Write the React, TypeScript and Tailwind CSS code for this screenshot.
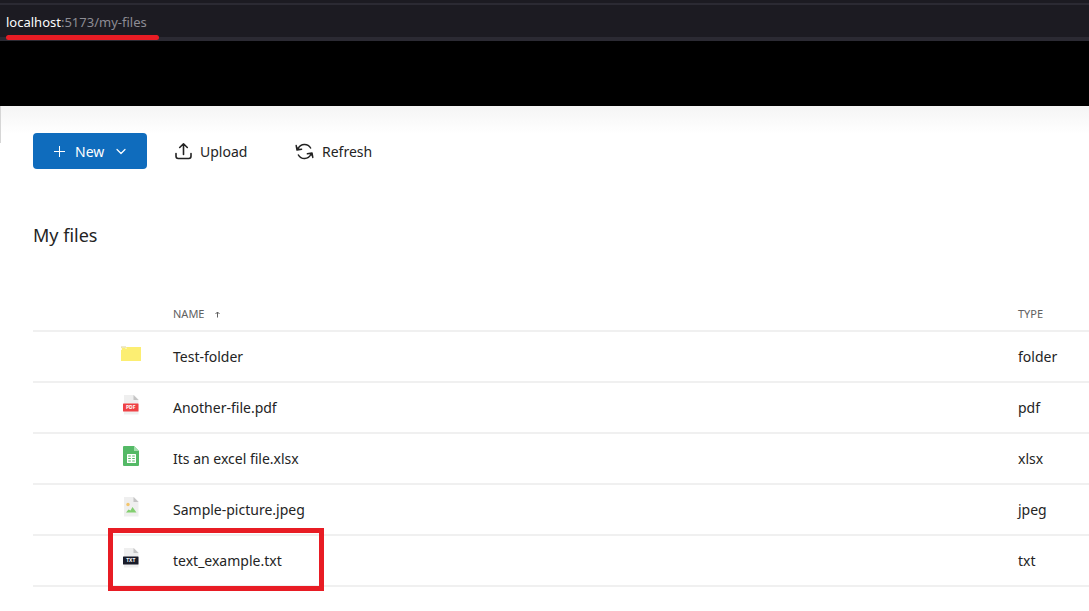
import React from "react";

type Kind = "folder" | "pdf" | "xlsx" | "jpeg" | "txt";

const files: { name: string; type: Kind; marked?: boolean }[] = [
  { name: "Test-folder", type: "folder" },
  { name: "Another-file.pdf", type: "pdf" },
  { name: "Its an excel file.xlsx", type: "xlsx" },
  { name: "Sample-picture.jpeg", type: "jpeg" },
  { name: "text_example.txt", type: "txt", marked: true },
];

function Sheet({ children }: { children?: React.ReactNode }) {
  return (
    <>
      <path d="M4 1h10l4.500 4.500V20.500H4z" fill="#efefef" />
      <path d="M13.500 1l5 5h-5z" fill="#c4c4c4" />
      {children}
    </>
  );
}

function Label({ fill, children }: { fill: string; children: React.ReactNode }) {
  return (
    <>
      <rect x="3" y="9.500" width="15.500" height="8" rx="0.500" fill={fill} />
      <text x="10.750" y="15.200" textAnchor="middle" fill="#fff" className="text-[5px] font-bold">
        {children}
      </text>
    </>
  );
}

function FileIcon({ kind }: { kind: Kind }) {
  return (
    <svg viewBox="0 0 22 22" className="block size-[22px]" aria-hidden="true">
      {kind === "folder" && (
        <>
          <path d="M1 4h20v14H1z" fill="#fcee72" />
          <path d="M1.500 7V4.500H6V6" fill="none" stroke="#fffbe0" />
          <path d="M1 4h5" stroke="#d3ca84" strokeWidth="0.800" />
        </>
      )}
      {kind === "pdf" && (
        <Sheet>
          <Label fill="#ef4145">PDF</Label>
        </Sheet>
      )}
      {kind === "xlsx" && (
        <>
          <path d="M3 2q0-1 1-1h10l5 5v14q0 1-1 1H4q-1 0-1-1z" fill="#54b966" />
          <path d="M14 1l5 5h-5z" fill="#a4deae" />
          <rect x="7" y="9" width="9" height="9" rx="0.500" fill="#fff" />
          <path d="M8.200 11h2.600M12.200 11h2.600M8.200 13.500h2.600M12.200 13.500h2.600M8.200 16h2.600M12.200 16h2.600" stroke="#54b966" strokeWidth="1.200" />
        </>
      )}
      {kind === "jpeg" && (
        <Sheet>
          <circle cx="8" cy="8.500" r="1.700" fill="#f3c56c" />
          <path d="M6 16.500l2.500-3 2 1 2-3.500 4 5.500z" fill="#83cf70" />
        </Sheet>
      )}
      {kind === "txt" && (
        <Sheet>
          <Label fill="#181b28">TXT</Label>
        </Sheet>
      )}
    </svg>
  );
}

function UploadIcon() {
  return (
    <svg viewBox="0 0 18 18" className="size-[18px]" fill="none" stroke="#222" strokeWidth="1.600" strokeLinecap="round" strokeLinejoin="round" aria-hidden="true">
      <path d="M8.500 12.500V2M4.700 5.500l3.800-3.700 3.800 3.700M1 11.500v2.800q0 2.200 2.200 2.200h10.600q2.200 0 2.200-2.200v-2.800" />
    </svg>
  );
}

function RefreshIcon() {
  return (
    <svg viewBox="0 0 20 18" className="h-[18px] w-5" fill="none" stroke="#222" strokeWidth="1.500" strokeLinecap="round" strokeLinejoin="round" aria-hidden="true">
      <path d="M3.200 6.500A7 7 0 0 1 15.600 6M15.800 12.500A7 7 0 0 1 3.400 13" />
      <path d="M1.200 3.600l.8 4.400 4.600-.8M17.800 15.400l-.8-4.400-4.600.8" />
      <path d="M1.200 3.600L2 8l4.600-.8-3.200-.8zM17.800 15.400L17 11l-4.600.8 3.200.8z" fill="#222" stroke="none" />
    </svg>
  );
}

export default function App() {
  return (
    <div className="min-h-screen overflow-x-hidden bg-white font-['Noto_Sans',sans-serif] text-[14px] text-[#242424]">
      <div className="flex h-[41px] items-center border-t-[3px] border-b-4 border-t-[#1c1b22] border-b-[#2b2a33] bg-[#1c1b22]">
        <div className="h-full w-full border-t-2 border-[#2b2a33] px-1.5 pt-[7px] text-[13px] leading-5 text-[#8d8c94]">
          <span className="relative inline-block">
            <span className="text-[#fbfbfe]">localhost</span>:5173/my-files
            <span className="absolute top-[23px] left-0 h-[5px] w-[153px] rounded-full bg-[#e81c24]" />
          </span>
        </div>
      </div>
      <header className="h-[65px] bg-black" />
      <main className="bg-linear-to-b from-[#f5f5f5] to-white to-[28px] pl-[33px]">
        <div className="relative flex items-center pt-[27px]">
          <span className="absolute top-0 -left-[33px] h-[37px] w-px bg-[#d6d6d6]" />
          <button className="flex h-9 w-[114px] items-center rounded-[4px] bg-[#0f6cbd] pl-5 text-white">
            <svg viewBox="0 0 12 12" className="size-3" fill="none" stroke="currentColor" aria-hidden="true">
              <path d="M6.500 1v11M1 6.500h11" />
            </svg>
            <span className="ml-2.5 w-8 text-left">New</span>
            <svg viewBox="0 0 12 12" className="ml-2 size-3" fill="none" stroke="currentColor" strokeWidth="1.200" strokeLinecap="round" strokeLinejoin="round" aria-hidden="true">
              <path d="M2 4.500l4 4 4-4" />
            </svg>
          </button>
          <button className="ml-7 flex w-[92px] items-center gap-[7px]">
            <UploadIcon />
            Upload
          </button>
          <button className="ml-7 flex items-center gap-[7px]">
            <RefreshIcon />
            Refresh
          </button>
        </div>
        <h1 className="mt-[52px] text-[18px] leading-7">My files</h1>
        <table className="mt-12 w-full table-fixed border-separate border-spacing-0 text-left">
          <colgroup>
            <col className="w-[140px]" />
            <col />
            <col className="w-[71px]" />
          </colgroup>
          <thead>
            <tr className="text-[11px] text-[#616161]">
              <th className="h-[35px] border-b-2 border-[#f0f0f0] p-0" aria-label="Icon" />
              <th className="border-b-2 border-[#f0f0f0] p-0 pt-0.5 font-normal">
                <button className="flex items-center gap-2.5">
                  NAME
                  <svg viewBox="0 0 8 8" className="size-2" fill="none" stroke="currentColor" aria-hidden="true">
                    <path d="M3.500 6.500V1M1.500 3l2-2 2 2" />
                  </svg>
                </button>
              </th>
              <th className="border-b-2 border-[#f0f0f0] p-0 pt-0.5 font-normal">TYPE</th>
            </tr>
          </thead>
          <tbody>
            {files.map((file) => (
              <tr key={file.name} className="relative">
                <td className="h-[51px] border-b-2 border-[#f0f0f0] p-0 pb-1.5 pl-[87px]">
                  <FileIcon kind={file.type} />
                  {file.marked && (
                    <span className="pointer-events-none absolute -top-2 left-[75px] h-[63px] w-[216px] border-[5px] border-[#e81c24]" />
                  )}
                </td>
                <td className="border-b-2 border-[#f0f0f0] p-0">{file.name}</td>
                <td className="border-b-2 border-[#f0f0f0] p-0">{file.type}</td>
              </tr>
            ))}
          </tbody>
        </table>
      </main>
    </div>
  );
}
